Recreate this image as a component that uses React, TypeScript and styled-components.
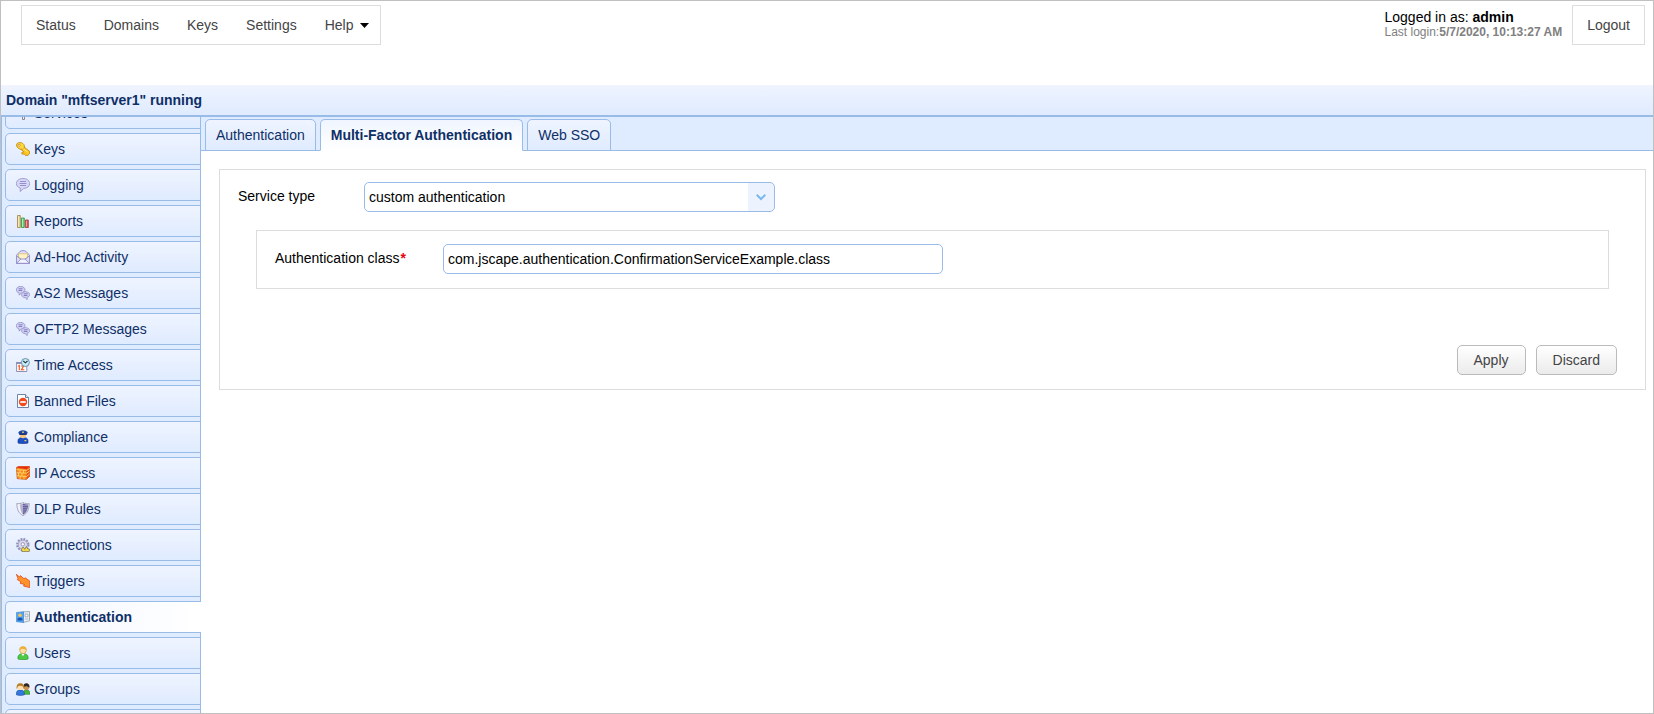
import React, { useLayoutEffect, useRef } from 'react';
import styled, { createGlobalStyle } from 'styled-components';

const line = '#99bbe8';
const ink = '#0f2f66';
const soft = 'linear-gradient(#eff4ff, #dfebff)';

const GlobalStyle = createGlobalStyle`
  *, *::before, *::after { box-sizing: border-box; }
  body { margin: 0; font: 14px/18px "Liberation Sans", Arial, sans-serif; color: #000; background: #fff; }
  a { color: inherit; text-decoration: none; }
  button, input, select { font: inherit; }
`;

const Page = styled.div`
  display: flex;
  flex-direction: column;
  height: 100vh;
  border: 1px solid #c0c0c0;
`;

const TopBar = styled.header`
  display: flex;
  justify-content: space-between;
  height: 84px;
  flex: none;
  padding: 4px 8px 0 20px;
`;

const Menu = styled.nav`
  display: flex;
  align-items: stretch;
  height: 40px;
  border: 1px solid #ddd;
`;

const MenuItem = styled.a`
  display: flex;
  align-items: center;
  gap: 7px;
  padding: 0 14px;
  color: #444;

  &:last-child { padding-right: 11px; }
`;

const Session = styled.div`
  display: flex;
  gap: 10px;
`;

const Login = styled.div`
  display: flex;
  flex-direction: column;
  padding-top: 3px;
`;

const LastLogin = styled.span`
  font-size: 12px;
  line-height: 12px;
  color: #808080;
`;

const Logout = styled.button`
  height: 40px;
  padding: 0 14px;
  border: 1px solid #ddd;
  background: #fff;
  color: #444;
`;

const DomainTitle = styled.h1`
  flex: none;
  height: 32px;
  margin: 0;
  padding: 0 5px;
  border-bottom: 2px solid ${line};
  background: ${soft};
  font-size: 14px;
  line-height: 30px;
  color: ${ink};
`;

const Body = styled.div`
  display: flex;
  flex: 1;
  min-height: 0;
`;

const Sidebar = styled.nav`
  width: 200px;
  flex: none;
  overflow-y: auto;
  scrollbar-width: none;
  border-left: 1px solid ${line};
  background: linear-gradient(${line}, ${line}) right / 1px 100% no-repeat #dfebff;
`;

const SideList = styled.ul`
  display: flex;
  flex-direction: column;
  gap: 4px;
  margin: 0;
  padding: 0 0 4px 3px;
  list-style: none;
`;

const SideLink = styled.a<{ $active?: boolean }>`
  display: flex;
  align-items: center;
  gap: 4px;
  height: 32px;
  padding-left: 10px;
  border: 1px solid ${line};
  border-right: ${(p) => (p.$active ? 'none' : `1px solid ${line}`)};
  border-radius: 5px 0 0 5px;
  background: ${(p) => (p.$active ? 'linear-gradient(90deg, #eff5ff, #fff)' : soft)};
  font-weight: ${(p) => (p.$active ? 'bold' : 'normal')};
  color: ${ink};
`;

const Main = styled.main`
  flex: 1;
  min-width: 0;
  overflow: auto;
`;

const TabBar = styled.div`
  display: flex;
  align-items: flex-end;
  gap: 4px;
  height: 34px;
  padding: 0 4px;
  background: linear-gradient(${line}, ${line}) bottom / 100% 1px no-repeat #dfebff;
`;

const Tab = styled.button<{ $active?: boolean }>`
  height: 32px;
  padding: 0 10px;
  border: 1px solid ${line};
  border-bottom-color: ${(p) => (p.$active ? '#fff' : line)};
  border-radius: 5px 5px 0 0;
  background: ${(p) => (p.$active ? 'linear-gradient(#eff5ff, #fff)' : soft)};
  font-weight: ${(p) => (p.$active ? 'bold' : 'normal')};
  color: ${ink};
`;

const Panel = styled.form`
  margin: 18px 7px 18px 18px;
  padding: 12px 28px 14px 18px;
  border: 1px solid #ddd;
`;

const Row = styled.div`
  display: flex;
`;

const Label = styled.label<{ $width: number }>`
  flex: none;
  width: ${(p) => p.$width}px;
  padding-top: 5px;
`;

const Required = styled.span`
  margin-left: 1px;
  font-weight: bold;
  color: #e8000c;
`;

const SelectBox = styled.div`
  display: grid;
  grid-template-columns: 1fr 26px;
  align-items: center;
  width: 411px;
  height: 30px;
  border: 1px solid ${line};
  border-radius: 5px;
  background: linear-gradient(#ecf3ff, #ecf3ff) right / 26px 100% no-repeat #fff;

  > svg { grid-area: 1 / 2; justify-self: center; pointer-events: none; }
`;

const Select = styled.select`
  grid-area: 1 / 1 / 2 / 3;
  height: 28px;
  padding: 0 30px 0 4px;
  border: 0;
  appearance: none;
  background: transparent;
  color: #000;
`;

const Nested = styled.div`
  margin: 18px 8px 0 18px;
  padding: 13px 18px 14px;
  border: 1px solid #ddd;
`;

const TextInput = styled.input`
  width: 500px;
  height: 30px;
  padding: 0 4px;
  border: 1px solid ${line};
  border-radius: 5px;
  background: #fff;
  color: #000;
`;

const Actions = styled.div`
  display: flex;
  justify-content: flex-end;
  gap: 10px;
  margin-top: 56px;
`;

const ActionButton = styled.button`
  height: 30px;
  padding: 0 16px;
  border: 1px solid #bbb;
  border-radius: 5px;
  background: linear-gradient(#fff, #ebebeb);
  color: #444;
`;

const Glyph = styled.svg`
  flex: none;
  width: 14px;
  height: 14px;
`;

const icons: Record<string, React.ReactNode> = {
  services: <path d="M6.500 5v8.500h2V8M11 5v6" fill="none" stroke="#888" />,
  keys: (
    <g stroke="#c08408" strokeWidth=".8" strokeLinejoin="round">
      <path d="m4.600 7.200 3.200 2.600-2.300 1 .8 1.400 2.300-.2 1 1.500 2.200.1 1.900-2.400-.3-2L8.400 5.200Z" fill="#fcc61a" />
      <path d="M.5 3.200C.6 1.300 2 .4 4 .5s4 1.400 4.400 3.300-.9 3.400-2.900 3.500S.4 5.600.5 3.200Z" fill="#ffd93c" />
      <path d="M2 3c.3-.9 1.500-1 2-.3s0 1.700-.8 1.700S1.800 3.800 2 3Z" fill="#f4f5ff" />
      <path d="m6.500 6.200 5.200 4" stroke="#fff3a0" />
    </g>
  ),
  logging: (
    <g stroke="#928ec4" strokeWidth=".8">
      <path d="M7 .5C3.300.5.4 2.500.4 5.400c0 2.400 1.500 3.900 3.900 4.600L4.200 13.500l3.500-3.100c3.500-.1 5.900-2 5.900-4.900C13.600 2.500 10.700.5 7 .5Z" fill="#d9d7f8" />
      <path d="M4 3.500h6M3.500 5.500h7M4 7.500h6" stroke="#8480bc" />
    </g>
  ),
  reports: (
    <g strokeWidth=".9">
      <path d="M1.500 1.500h2.800v12H1.500Z" fill="#f2d48c" stroke="#a88a50" />
      <path d="M5.500 4h2.800v9.500H5.500Z" fill="#66dc7c" stroke="#3a9c50" />
      <path d="M9.500 6h2.800v7.500H9.500Z" fill="#f05050" stroke="#b04040" />
      <path d="M2.600 2.200v10.600M6.500 4.700v8.200M10.400 6.700v6" stroke="#fff" strokeWidth=".7" opacity=".7" />
    </g>
  ),
  mail: (
    <g stroke="#8f8cc6" strokeWidth=".9">
      <path d="M.5 5.200 4 1.400C5.500.3 8.500.3 10 1.400l3.500 3.800v8.300H.5Z" fill="#dddcf8" />
      <path d="M2.500 3.800h9v4L8.800 9.500H5.200L2.500 7.800Z" fill="#fff3c6" stroke="#dfc27a" />
      <path d="m.6 13.300 4.400-4.300h4l4.400 4.300Z" fill="#f4f4ff" />
      <path d="M.6 5.800l4.500 3.400m8.300-3.400L8.900 9.200" fill="none" />
    </g>
  ),
  messages: (
    <g fill="#d2d0f4" stroke="#928ec4" strokeWidth=".8">
      <path d="M4.600.4C2.200.4.4 1.800.4 3.700c0 1.700 1.100 2.800 2.600 3.200l.3 2.300 2-2.300C7.700 6.700 9 5.400 9 3.700 9 1.800 7 .4 4.600.4Z" />
      <path d="M9.600 5.700C7.200 5.600 5.600 6.900 5.600 8.700s1.500 2.800 3.500 2.900l2.100 2-.1-2.300c1.500-.4 2.500-1.200 2.500-2.600 0-1.700-1.600-3-4-3Z" />
      <path d="M2.600 2.800h4M2.600 4.500h3.500M7.800 7.800h4M7.800 9.500h3.500" fill="none" stroke="#6f6aae" />
    </g>
  ),
  time: (
    <g strokeWidth=".9">
      <path d="M.6 4.500h10.200v9H.6Z" fill="#fff" stroke="#8684ac" />
      <path d="M.2 4h5.600v2H.2Z" fill="#908ebc" />
      <path d="M2.200 8.300 3.300 7.500V12.200M5.200 8h2.500L5.400 11.800H8.300" fill="none" stroke="#f0541c" strokeWidth="1.100" />
      <circle cx="9.400" cy="4.500" r="4" fill="#c6ebf8" stroke="#62879c" />
      <path d="m7.300 3 2.100 1.800L11.500 3" fill="none" stroke="#1c3440" strokeWidth="1.100" />
    </g>
  ),
  banned: (
    <g strokeWidth=".9">
      <path d="M1.500.5h8l3 3v10h-11Z" fill="#fff" stroke="#5f7698" />
      <path d="M9.500.5v3h3" fill="#dce6f5" stroke="#5f7698" />
      <circle cx="7" cy="8" r="4.200" fill="#f04a22" />
      <path d="M4.300 8h5.400" stroke="#fff" strokeWidth="1.700" />
    </g>
  ),
  officer: (
    <g>
      <path d="M2 13V10.200C2 8.600 4 7.400 7 7.400s5 1.200 5 2.800V13c-2.800 1.100-7.200 1.100-10 0Z" fill="#1c50c4" stroke="#122e80" strokeWidth=".6" />
      <circle cx="7" cy="5.300" r="3" fill="#f6c47c" />
      <path d="M2.300 2.800C2.700 1 4.500.2 7 .2s4.300.8 4.700 2.600L10.500 4.800h-7Z" fill="#1e44a8" />
      <path d="M3.500 4.300h7" stroke="#101c50" strokeWidth=".8" />
      <path d="M6.200 1.500h1.600v1.400H6.200ZM8.500 10h1.800v1.200H8.500Z" fill="#f8d850" />
    </g>
  ),
  firewall: (
    <g>
      <path d="M.3 1.500 2.500.5h11.200v9.800L10.500 13.500 1.200 12.700Z" fill="#f5881e" stroke="#c04412" strokeWidth=".6" />
      <path d="M.4 1.500 2.500.6h11l-3 2.700Z" fill="#e62c12" />
      <path d="m10.600 3.300 3-2.500v9.500l-3 3Z" fill="#e4531a" />
      <path d="M.6 3.600l9.900.9 3-2M.8 6.700l9.700.5 3-2M1 9.800l9.500.7 3-2.500M4 4v3M7.500 4.200v3M2.500 7v3M6 7.200v3M4.200 10v3M8 10.300v3" fill="none" stroke="#ffd463" strokeWidth=".9" />
    </g>
  ),
  shield: (
    <g>
      <path d="M.8 1.500C3 1.900 5.200 1.500 7 .6c1.800.9 4 1.300 6.200.9C13 7.500 11.300 11.500 7 13.600 2.700 11.500 1 7.500.8 1.500Z" fill="#f2f2f8" stroke="#9e9cb8" strokeWidth=".9" />
      <path d="M4 2.500 7 1.700v10.800C5 11 4.200 7 4 2.500Z" fill="#b4b2d2" />
      <path d="M7 1.600c1.600.7 3.300 1.100 5.300.9C12 7.500 10.400 10.600 7 12.700Z" fill="#63609a" />
      <path d="M7 3.500h5M7 5.700h4.600M7 7.900h3.900M7 10h2.500" stroke="#a5a2ce" strokeWidth=".7" />
    </g>
  ),
  gear: (
    <g>
      <circle cx="6.800" cy="6.700" r="5.700" fill="none" stroke="#8c8ab4" strokeWidth="2" strokeDasharray="1.800 1.184" />
      <circle cx="6.800" cy="6.700" r="4.600" fill="#dad9ec" stroke="#8c8ab4" strokeWidth=".7" />
      <circle cx="6.800" cy="6.300" r="1.700" fill="#fff" stroke="#8c8ab4" strokeWidth=".9" />
      <path d="M5.400 11.500 7 9l1.800 2.300L10.300 8.500l1.200 2.200 2 .5-.2 2.200H6Z" fill="#fbe04c" stroke="#6c6444" strokeWidth=".7" />
    </g>
  ),
  trigger: (
    <path d="M.3.300 3.600 3 4.500 1.600 8 4.800l1.200-1 4.500 3.200v6.600L7.500 12l1-1.600-4.200-1 .5-1.700L1.200 5.500l.8-1Z" fill="#ff9228" stroke="#e4481c" strokeWidth=".8" />
  ),
  card: (
    <g>
      <path d="M7 2 13.500 1.500v9.300L7 12.500Z" fill="#eef0f4" stroke="#8c98a8" strokeWidth=".8" />
      <path d="M.4 2.500 7.500 1.700v10.800L.4 11.700Z" fill="#52a6f4" stroke="#3c80cc" strokeWidth=".6" />
      <circle cx="4" cy="5.200" r="1.700" fill="#f9c452" />
      <path d="M1.500 10.600V9C1.800 7 6.200 7 6.500 9v1.600Z" fill="#1c55b0" />
      <path d="M9 4h3v2.800H9ZM8.800 9h3.500" fill="none" stroke="#98a2b0" strokeWidth=".7" />
    </g>
  ),
  user: (
    <g>
      <path d="M2 13c-.6-3.500 1.300-5.300 5-5.300S12.600 9.500 12 13c-2.500 1-7.500 1-10 0Z" fill="#4ecb42" stroke="#2f9030" strokeWidth=".7" />
      <path d="m5.400 7.800 1.600 2.500 1.600-2.500Z" fill="#fff" />
      <circle cx="7" cy="4.300" r="3.300" fill="#fde0a8" stroke="#cb9638" strokeWidth=".6" />
      <path d="M3.500 4.600C3 1.800 4.600.3 7 .3s4 1.500 3.500 4.100C9.300 3.300 7 2.400 5.800 2.800 4.900 3.100 4.100 3.700 3.500 4.600Z" fill="#edae3c" />
    </g>
  ),
  group: (
    <g>
      <path d="M7.500 12.300c0-3.200.6-4.300 2.900-4.300s3.600 1 3.400 4.300Z" fill="#46bc3a" stroke="#2a7c28" strokeWidth=".6" />
      <circle cx="10.400" cy="5.400" r="2.700" fill="#cc9450" />
      <path d="M7.400 5.200C7.200 2.500 8.400 1.300 10.400 1.300s3.600 1.500 3 4.500C12 3.900 9 3.600 7.400 5.200Z" fill="#2e2820" />
      <path d="M.4 12.800c-.2-3.500 1-4.800 3.900-4.800s4.400 1.300 4.100 4.800c-2 .8-6 .8-8 0Z" fill="#3478dc" stroke="#1c4c9c" strokeWidth=".6" />
      <circle cx="4.300" cy="5" r="3.100" fill="#fde0ac" />
      <path d="M.8 7.300C.1 3 1.500 1.200 4.300 1.200S8.500 3 7.800 7.300L6.600 4.300C5 3.500 3.500 3.500 2.100 4.300Z" fill="#b8822a" />
    </g>
  ),
};

const sections: { label: string; icon: string }[] = [
  { label: 'Services', icon: 'services' },
  { label: 'Keys', icon: 'keys' },
  { label: 'Logging', icon: 'logging' },
  { label: 'Reports', icon: 'reports' },
  { label: 'Ad-Hoc Activity', icon: 'mail' },
  { label: 'AS2 Messages', icon: 'messages' },
  { label: 'OFTP2 Messages', icon: 'messages' },
  { label: 'Time Access', icon: 'time' },
  { label: 'Banned Files', icon: 'banned' },
  { label: 'Compliance', icon: 'officer' },
  { label: 'IP Access', icon: 'firewall' },
  { label: 'DLP Rules', icon: 'shield' },
  { label: 'Connections', icon: 'gear' },
  { label: 'Triggers', icon: 'trigger' },
  { label: 'Authentication', icon: 'card' },
  { label: 'Users', icon: 'user' },
  { label: 'Groups', icon: 'group' },
  { label: '', icon: '' },
];

export default function App() {
  const sidebar = useRef<HTMLElement>(null);

  useLayoutEffect(() => {
    if (sidebar.current) sidebar.current.scrollTop = 20;
  }, []);

  return (
    <>
      <GlobalStyle />
      <Page>
        <TopBar>
          <Menu>
            <MenuItem href="#status">Status</MenuItem>
            <MenuItem href="#domains">Domains</MenuItem>
            <MenuItem href="#keys">Keys</MenuItem>
            <MenuItem href="#settings">Settings</MenuItem>
            <MenuItem href="#help">
              Help
              <svg width="9" height="5" viewBox="0 0 9 5"><path d="M0 0h9L4.500 5Z" /></svg>
            </MenuItem>
          </Menu>
          <Session>
            <Login>
              <span>Logged in as: <b>admin</b></span>
              <LastLogin>Last login:<b>5/7/2020, 10:13:27 AM</b></LastLogin>
            </Login>
            <Logout type="button">Logout</Logout>
          </Session>
        </TopBar>
        <DomainTitle>Domain "mftserver1" running</DomainTitle>
        <Body>
          <Sidebar ref={sidebar}>
            <SideList>
              {sections.map(({ label, icon }) => (
                <li key={label}>
                  <SideLink href="#section" $active={label === 'Authentication'}>
                    <Glyph viewBox="0 0 14 14">{icons[icon]}</Glyph>
                    {label}
                  </SideLink>
                </li>
              ))}
            </SideList>
          </Sidebar>
          <Main>
            <TabBar role="tablist">
              <Tab type="button" role="tab">Authentication</Tab>
              <Tab type="button" role="tab" aria-selected $active>Multi-Factor Authentication</Tab>
              <Tab type="button" role="tab">Web SSO</Tab>
            </TabBar>
            <Panel onSubmit={(e) => e.preventDefault()}>
              <Row>
                <Label htmlFor="service-type" $width={126}>Service type</Label>
                <SelectBox>
                  <Select id="service-type" defaultValue="custom">
                    <option value="custom">custom authentication</option>
                  </Select>
                  <svg width="10" height="7" viewBox="0 0 10 7">
                    <path d="m.7.8 4.300 4.200L9.300.8" fill="none" stroke="#7ab8ee" strokeWidth="2" />
                  </svg>
                </SelectBox>
              </Row>
              <Nested>
                <Row>
                  <Label htmlFor="auth-class" $width={168}>
                    Authentication class<Required>*</Required>
                  </Label>
                  <TextInput id="auth-class" defaultValue="com.jscape.authentication.ConfirmationServiceExample.class" />
                </Row>
              </Nested>
              <Actions>
                <ActionButton type="submit">Apply</ActionButton>
                <ActionButton type="button">Discard</ActionButton>
              </Actions>
            </Panel>
          </Main>
        </Body>
      </Page>
    </>
  );
}
